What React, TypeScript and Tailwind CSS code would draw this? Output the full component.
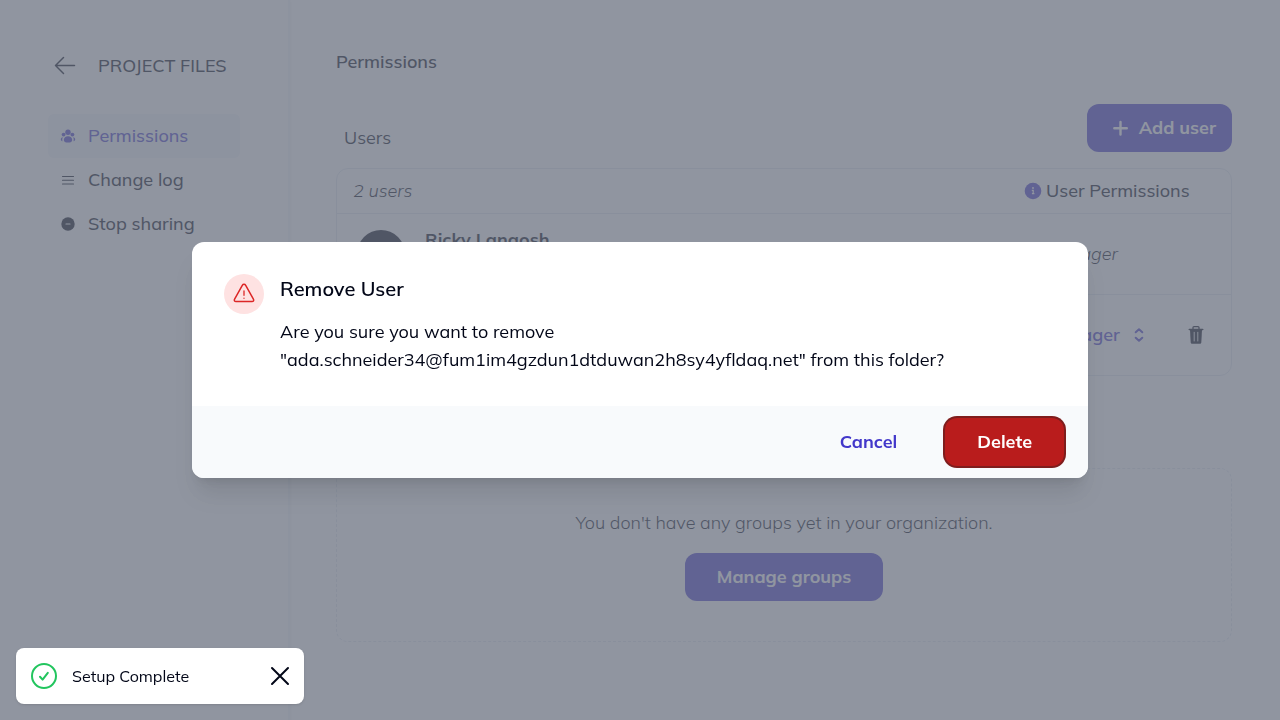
import React, { useState } from 'react';

interface NavItem {
  label: string;
  icon: React.ReactNode;
  active?: boolean;
}

const UsersIcon = () => (
  <svg viewBox="0 0 16 16" className="size-4" fill="currentColor" aria-hidden="true">
    <circle cx="8" cy="4.2" r="2.7" />
    <circle cx="3.6" cy="6.6" r="1.9" />
    <circle cx="12.4" cy="6.6" r="1.9" />
    <path d="M8 8.200c2.400 0 4.200 1.700 4.200 3.800 0 1.700-1.500 2.600-4.200 2.600s-4.200-.9-4.200-2.600c0-2.100 1.800-3.800 4.200-3.800z" />
    <path d="M2.800 9.200c-.6 1.200-.7 2.600-.3 4.100C1.400 13 .8 12.300.8 11.300c0-1 .8-1.800 2-2.100zM13.200 9.200c.6 1.200.7 2.600.3 4.100 1.100-.3 1.700-1 1.700-2 0-1-.8-1.800-2-2.100z" />
  </svg>
);

const LinesIcon = () => (
  <svg viewBox="0 0 16 16" className="size-4" fill="none" stroke="currentColor" strokeWidth="1.1" strokeLinecap="round" aria-hidden="true">
    <path d="M2.5 4.5h11M2.5 8.3h11M2.5 12h11" />
  </svg>
);

const StopIcon = () => (
  <svg viewBox="0 0 16 16" className="size-4" aria-hidden="true">
    <circle cx="8" cy="8" r="6.7" fill="currentColor" />
    <path d="M6 8h4" stroke="white" strokeWidth="1.2" strokeLinecap="round" />
  </svg>
);

const navItems: NavItem[] = [
  { label: 'Permissions', icon: <UsersIcon />, active: true },
  { label: 'Change log', icon: <LinesIcon /> },
  { label: 'Stop sharing', icon: <StopIcon /> },
];

const Sidebar = () => (
  <aside className="w-[290px] shrink-0 border-r-2 border-[#f1f5f9] px-12 pt-12 font-medium shadow-sm">
    <div className="flex h-9 items-center gap-5">
      <button type="button" aria-label="Back" className="ml-1">
        <svg viewBox="0 0 26 26" className="size-[26px]" fill="none" stroke="currentColor" strokeWidth="1.5" strokeLinecap="round" strokeLinejoin="round">
          <path d="M22.500 12.500h-19M11.500 4.500l-8 8 8 8" />
        </svg>
      </button>
      <span className="whitespace-nowrap">PROJECT FILES</span>
    </div>
    <nav className="mt-[30px]">
      {navItems.map((item) => (
        <a
          key={item.label}
          href="#"
          className={`flex h-11 items-center gap-3 rounded-md px-3 ${item.active ? 'bg-[#f1f5f9] text-[#4338ca]' : ''}`}
        >
          {item.icon}
          {item.label}
        </a>
      ))}
    </nav>
  </aside>
);

const UsersTable = () => (
  <div className="mt-4 overflow-hidden rounded-xl border border-[#e2e8f0]">
    <table className="w-full table-fixed text-left">
      <colgroup>
        <col />
        <col className="w-[207px]" />
      </colgroup>
      <thead>
        <tr className="h-11 border-b border-[#e2e8f0]">
          <th className="px-4 font-light italic">2 users</th>
          <th className="font-medium">
            <span className="flex items-center gap-1">
              <svg viewBox="0 0 18 18" className="size-[18px] text-[#4338ca]" aria-hidden="true">
                <circle cx="9" cy="9" r="8.3" fill="currentColor" />
                <path d="M7.800 8.300h1.400v3.200M7.900 11.600h2.500" fill="none" stroke="white" strokeWidth="1.2" />
                <circle cx="9" cy="6" r="0.9" fill="white" />
              </svg>
              User Permissions
            </span>
          </th>
        </tr>
      </thead>
      <tbody>
        <tr className="h-[81px] border-b border-[#e2e8f0]">
          <td className="px-5">
            <div className="flex items-center gap-5">
              <div className="size-12 rounded-full bg-[#020617]" />
              <div className="leading-7">
                <div className="font-bold">Ricky Langosh</div>
                <div className="font-light">Owner</div>
              </div>
            </div>
          </td>
          <td className="pl-5 font-light italic">Manager</td>
        </tr>
        <tr className="h-[81px]">
          <td className="px-5">
            <div className="flex items-center gap-5">
              <div className="size-12 rounded-full bg-[#020617]" />
              <div className="font-bold">Ada</div>
            </div>
          </td>
          <td className="pl-5">
            <div className="flex items-center justify-between pr-[25px]">
              <div className="relative text-[#4338ca]">
                <select aria-label="Permission" className="w-[103px] appearance-none bg-transparent font-semibold">
                  <option>Manager</option>
                  <option>Editor</option>
                </select>
                <svg viewBox="0 0 16 16" className="pointer-events-none absolute top-1/2 right-0 size-4 -translate-y-1/2" fill="none" stroke="currentColor" strokeWidth="2" strokeLinecap="round" strokeLinejoin="round">
                  <path d="M4.700 5.300 8 2.200l3.300 3.100M4.700 10.700 8 13.800l3.300-3.100" />
                </svg>
              </div>
              <button type="button" aria-label="Remove user">
                <svg viewBox="0 0 20 20" className="size-5" fill="none" stroke="currentColor" aria-hidden="true">
                  <path d="M3.300 4.500h13.400" strokeWidth="1.6" strokeLinecap="round" />
                  <path d="M7 4V2.600c0-.6.4-1 1-1h4c.6 0 1 .4 1 1V4" strokeWidth="1.3" />
                  <path d="M4 5h12l-.7 12.400c-.1.900-.7 1.400-1.600 1.400H6.300c-.9 0-1.500-.5-1.600-1.400z" fill="currentColor" stroke="none" />
                  <path d="M8.200 7.300v8.700M11.800 7.300v8.700" stroke="white" strokeWidth="0.9" strokeLinecap="round" />
                </svg>
              </button>
            </div>
          </td>
        </tr>
      </tbody>
    </table>
  </div>
);

const Page = () => (
  <div className="flex min-h-screen">
    <Sidebar />
    <main className="min-w-0 flex-1 pt-12 pr-12 pl-[46px]">
      <h1 className="font-semibold">Permissions</h1>
      <div className="mt-7 flex items-center justify-between">
        <h2 className="px-2 pt-5">Users</h2>
        <button type="button" className="flex h-12 items-center gap-2 rounded-xl bg-[#4338ca] pr-4 pl-6 font-bold text-white">
          <svg viewBox="0 0 20 20" className="size-5" fill="none" stroke="currentColor" strokeWidth="2.4" strokeLinecap="round" aria-hidden="true">
            <path d="M9.500 4v12.500M3.300 10.200h12.500" />
          </svg>
          Add user
        </button>
      </div>
      <UsersTable />
      <h2 className="mt-12 px-2">Groups</h2>
      <section className="mt-4 flex flex-col items-center rounded-xl border border-dashed border-[#e2e8f0] py-10">
        <p className="font-light">You don't have any groups yet in your organization.</p>
        <button type="button" className="mt-4 h-12 rounded-xl bg-[#4338ca] px-8 font-bold text-white">
          Manage groups
        </button>
      </section>
    </main>
  </div>
);

const RemoveUserDialog = ({ onClose }: { onClose: () => void }) => (
  <div className="fixed inset-0 flex items-center justify-center bg-[#6b7280]/75">
    <div role="dialog" aria-modal="true" aria-labelledby="remove-title" className="w-full max-w-4xl overflow-hidden rounded-xl bg-white shadow-xl">
      <div className="flex gap-4 p-8">
        <div className="flex size-10 shrink-0 items-center justify-center rounded-full bg-[#fee2e2] text-[#dc2626]">
          <svg viewBox="0 0 24 24" className="size-6" fill="none" stroke="currentColor" strokeWidth="1.5" strokeLinecap="round" strokeLinejoin="round" aria-hidden="true">
            <path d="M10.300 3.300 2.600 17.100c-.8 1.400 0 2.500 1.400 2.500h16c1.400 0 2.200-1.100 1.400-2.500L13.700 3.300c-.8-1.400-2.600-1.400-3.400 0z" />
            <path d="M12 9v4.300M12 16.200v.1" strokeWidth="1.3" />
          </svg>
        </div>
        <div>
          <h3 id="remove-title" className="text-xl leading-[30px] font-semibold">Remove User</h3>
          <p className="mt-[14px] leading-7">
            Are you sure you want to remove
            <br />
            "ada.schneider34@fum1im4gzdun1dtduwan2h8sy4yfldaq.net" from this folder?
          </p>
        </div>
      </div>
      <div className="flex justify-end gap-4 bg-[#f8fafc] px-6 py-3 font-bold">
        <button type="button" onClick={onClose} className="h-12 px-8 text-[#4338ca]">Cancel</button>
        <button type="button" onClick={onClose} className="h-12 rounded-xl bg-[#b91c1c] px-8 text-white ring-2 ring-[#7f1d1d]">Delete</button>
      </div>
    </div>
  </div>
);

const Toast = ({ onClose }: { onClose: () => void }) => (
  <div role="status" className="fixed bottom-4 left-4 flex h-14 w-72 items-center gap-3 rounded-lg bg-white px-3 shadow-sm">
    <svg viewBox="0 0 32 32" className="size-8 text-[#22c55e]" fill="none" stroke="currentColor" strokeWidth="2" strokeLinecap="round" strokeLinejoin="round" aria-hidden="true">
      <circle cx="16" cy="16" r="12" />
      <path d="M12 16.800l2.600 2.800 5.200-6.800" />
    </svg>
    <span className="flex-1 text-base">Setup Complete</span>
    <button type="button" aria-label="Dismiss" onClick={onClose}>
      <svg viewBox="0 0 24 24" className="size-6" fill="none" stroke="currentColor" strokeWidth="2" strokeLinecap="round">
        <path d="M4 4l16 16M20 4L4 20" />
      </svg>
    </button>
  </div>
);

const App: React.FC = () => {
  const [dialogOpen, setDialogOpen] = useState<boolean>(true);
  const [toastOpen, setToastOpen] = useState<boolean>(true);

  return (
    <div className="bg-white font-['Mulish','Lato',sans-serif] text-lg leading-7 text-[#020617]">
      <Page />
      {dialogOpen && <RemoveUserDialog onClose={() => setDialogOpen(false)} />}
      {toastOpen && <Toast onClose={() => setToastOpen(false)} />}
    </div>
  );
};

export default App;
